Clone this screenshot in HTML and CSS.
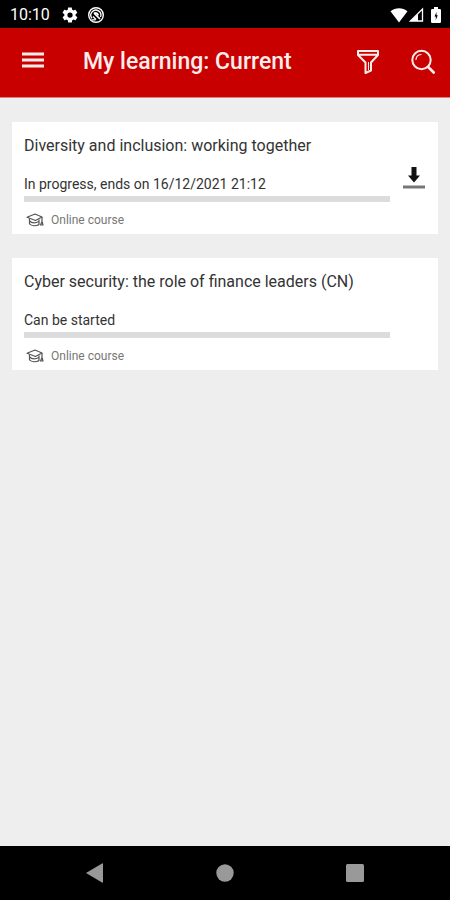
FILE: index.html
```
<!DOCTYPE html>
<html lang="en">
<head>
  <meta charset="UTF-8" />
  <meta name="viewport" content="width=device-width, initial-scale=1" />
  <title>My learning</title>
  <link rel="stylesheet" href="styles.css">
</head>
<body>

  <!-- shared icon shapes -->
  <svg class="sprite" width="0" height="0" aria-hidden="true">
    <symbol id="course" viewBox="0 0 18 14">
      <path d="M1 4.2 9 1l7 3-6.5 3.5z" />
      <path d="M3.5 5.8v5c2 2 6 2.600 9.500.8V6.400" />
      <path d="M3.500 8c2 1.800 6 2.200 9.500.5M16 4v4.500M16 8.500l-1.500 3.500h2.500z" />
    </symbol>
  </svg>

  <div class="status-bar">
    <span class="time">10:10</span>
    <svg width="18" height="18" viewBox="0 0 24 24" fill="#fff">
      <path d="M19.400 13c.1-.3.1-.7.1-1s0-.7-.1-1l2.100-1.600c.2-.2.2-.4.1-.6l-2-3.500c-.1-.2-.4-.3-.6-.2l-2.500 1c-.5-.4-1.100-.7-1.700-1l-.4-2.600c0-.3-.2-.5-.5-.5h-4c-.2 0-.4.2-.5.400l-.4 2.700c-.6.200-1.100.600-1.700 1l-2.500-1c-.2-.1-.5 0-.6.200l-2 3.500c-.1.200-.1.500.1.600L4.500 11c0 .3-.1.700-.1 1s0 .7.1 1l-2.100 1.600c-.2.200-.2.400-.1.600l2 3.500c.1.200.4.300.6.200l2.500-1c.5.400 1.100.7 1.700 1l.4 2.600c0 .3.300.5.500.5h4c.300 0 .5-.2.500-.400l.4-2.700c.6-.2 1.200-.6 1.700-1l2.500 1c.200.1.5 0 .6-.2l2-3.500c.1-.2.1-.5-.1-.6zM12 15.500a3.500 3.500 0 1 1 0-7 3.500 3.500 0 0 1 0 7z" />
    </svg>
    <svg width="18" height="18" viewBox="0 0 18 18" fill="none" stroke="#fff">
      <circle cx="9" cy="9" r="7.300" stroke-width="1.400" />
      <path d="M5 12.300A5 5 0 1 1 13.500 11M4.500 13.800h4M6 10.500l3 3" stroke-width="1.300" />
      <path d="M7 7.200c2-1 4 .3 4.300 2.200M7 7.200l6 5.800" stroke-width="1.700" />
    </svg>
    <div class="signals">
      <svg width="18" height="16" viewBox="0 0 18 16" fill="#fff">
        <path d="M9 15.500.5 4.300C5.300.2 12.700.2 17.500 4.300z" />
      </svg>
      <svg width="15" height="16" viewBox="0 0 15 16">
        <path d="M13.500 2v12H1.500z" fill="none" stroke="#fff" stroke-width="1.300" />
        <path d="M9 7v7H1.500z" fill="#fff" />
      </svg>
      <svg class="battery" width="10" height="16" viewBox="0 0 10 16">
        <path d="M3 0h4v2h1.800q1.200 0 1.200 1.200v11.600q0 1.200-1.200 1.200H1.200Q0 16 0 14.800V3.200Q0 2 1.200 2H3z" fill="#fff" />
        <path d="M5.500 5 3.500 9.500h1.300v3.500l2-4.700H5.500z" fill="#000" />
      </svg>
    </div>
  </div>

  <header class="app-bar">
    <button class="icon-btn menu-btn" type="button" aria-label="Menu">
      <svg width="22" height="16" viewBox="0 0 22 16" stroke="#ffecec" stroke-width="3">
        <path d="M0 2h22M0 8h22M0 14h22" />
      </svg>
    </button>
    <h1>My learning: Current</h1>
    <button class="icon-btn" type="button" aria-label="Filter">
      <svg width="24" height="26" viewBox="0 0 24 26" fill="none" stroke="#ffecec" stroke-width="2" stroke-linejoin="round">
        <path d="M2 2h20v4l-7 7.500v8L9.500 24V13.500L2 6zM3 5.700h18" />
        <path d="M12.500 13v8" stroke-width="1" />
      </svg>
    </button>
    <button class="icon-btn" type="button" aria-label="Search">
      <svg width="24" height="26" viewBox="0 0 24 26" fill="none" stroke="#ffecec" stroke-linecap="round">
        <circle cx="10.500" cy="11" r="9.200" stroke-width="2" />
        <path d="M5 10.500a5.500 5.500 0 0 1 5-5" stroke-width="1.200" />
        <path d="M17.200 18l5.500 5.500" stroke-width="2.600" />
      </svg>
    </button>
  </header>

  <main class="courses">
    <article class="card">
      <div class="card-body">
        <h2>Diversity and inclusion: working together</h2>
        <label class="state" for="progress1">In progress, ends on 16/12/2021 21:12</label>
        <progress id="progress1" value="0" max="100"></progress>
        <div class="type">
          <svg class="course-icon" width="18" height="14"><use href="#course" /></svg>
          <span>Online course</span>
        </div>
      </div>
      <div class="card-action">
        <button class="icon-btn" type="button" aria-label="Download">
          <svg width="22" height="24" viewBox="0 0 22 24">
            <path d="M8.500 1h5v8.500H17l-6 7-6-7h3.500z" fill="#111" />
            <path d="M0 21h22" stroke="#777" stroke-width="3" />
          </svg>
        </button>
      </div>
    </article>

    <article class="card">
      <div class="card-body">
        <h2>Cyber security: the role of finance leaders (CN)</h2>
        <label class="state" for="progress2">Can be started</label>
        <progress id="progress2" value="0" max="100"></progress>
        <div class="type">
          <svg class="course-icon" width="18" height="14"><use href="#course" /></svg>
          <span>Online course</span>
        </div>
      </div>
      <div class="card-action"></div>
    </article>
  </main>

  <nav class="nav-bar">
    <button class="icon-btn" type="button" aria-label="Back">
      <svg width="20" height="20" viewBox="0 0 20 20" fill="#999"><path d="M1 10 17 .5q1-.5 1 .5v18q0 1-1 .5z" /></svg>
    </button>
    <button class="icon-btn" type="button" aria-label="Home">
      <svg width="20" height="20" viewBox="0 0 20 20" fill="#999"><circle cx="10" cy="10" r="8.700" /></svg>
    </button>
    <button class="icon-btn" type="button" aria-label="Recent apps">
      <svg width="20" height="20" viewBox="0 0 20 20" fill="#999"><rect x="1" y="1" width="18" height="18" rx="1.500" /></svg>
    </button>
  </nav>

</body>
</html>
```
FILE: styles.css
```
* {
  box-sizing: border-box;
}

body {
  margin: 0;
  min-height: 100vh;
  display: flex;
  flex-direction: column;
  background-color: #eeeeee;
  font-family: Roboto, "Liberation Sans", sans-serif;
  color: #333;
}

svg {
  display: block;
  flex-shrink: 0;
}

.sprite {
  position: absolute;
}

.icon-btn {
  padding: 0;
  border: none;
  background: none;
  cursor: pointer;
}

/* phone status bar */
.status-bar {
  display: flex;
  align-items: center;
  gap: 8px;
  height: 28px;
  padding: 1px 9px 0 10px;
  background-color: #000;
  color: #fff;
}

.time {
  width: 43px;
  font-size: 16px;
  line-height: 28px;
}

.signals {
  display: flex;
  align-items: center;
  gap: 1px;
  margin-left: auto;
}

.battery {
  margin-left: 6px;
}

/* app header */
.app-bar {
  display: flex;
  align-items: center;
  gap: 31px;
  height: 70px;
  padding: 0 15px 2px 22px;
  background-color: #c80000;
  border-bottom: 1px solid #e08080;
}

.app-bar h1 {
  flex: 1;
  margin: 0 0 0 8px;
  font-size: 23px;
  line-height: 32px;
  font-weight: 500;
  color: #ffecec;
}

.menu-btn {
  margin-bottom: 4px;
}

/* course list */
.courses {
  flex: 1;
  display: flex;
  flex-direction: column;
  gap: 24px;
  padding: 24px 12px;
}

.card {
  display: flex;
  background-color: #fff;
  padding: 12px 0 4px 12px;
}

.card-body {
  flex: 1;
  display: flex;
  flex-direction: column;
}

.card h2 {
  margin: 0 0 18px;
  font-size: 16px;
  line-height: 24px;
  font-weight: 400;
}

.state {
  font-size: 14px;
  line-height: 16px;
  margin-bottom: 4px;
}

progress {
  appearance: none;
  display: block;
  width: 100%;
  height: 6px;
  border: none;
  background-color: #dcdcdc;
}

progress::-webkit-progress-bar {
  background-color: #dcdcdc;
}

progress::-webkit-progress-value {
  background-color: #c80000;
}

.type {
  display: flex;
  align-items: center;
  gap: 7px;
  margin-top: 8px;
  padding-left: 2px;
  font-size: 12px;
  line-height: 20px;
  color: #777;
}

.course-icon {
  fill: none;
  stroke: #555;
  stroke-width: 1.2;
  stroke-linejoin: round;
}

.card-action {
  display: flex;
  align-items: center;
  justify-content: center;
  width: 48px;
  padding-bottom: 8px;
}

/* system navigation */
.nav-bar {
  display: flex;
  height: 54px;
  padding: 0 30px;
  background-color: #000;
}

.nav-bar .icon-btn {
  flex: 1;
  display: flex;
  align-items: center;
  justify-content: center;
}
```
